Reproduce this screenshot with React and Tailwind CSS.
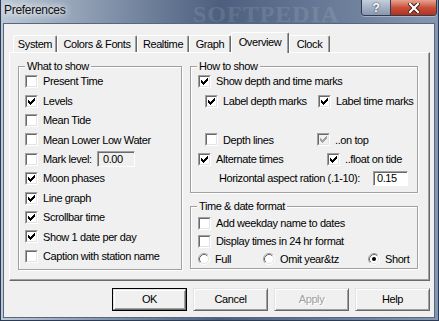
import React from 'react';

// classic 7x7 check glyph
const CHECK_PIXELS = [
  [6, 0], [5, 1], [6, 1], [0, 2], [4, 2], [5, 2], [6, 2],
  [0, 3], [1, 3], [3, 3], [4, 3], [5, 3], [0, 4], [1, 4], [2, 4], [3, 4], [4, 4],
  [1, 5], [2, 5], [3, 5], [2, 6],
];

const CheckGlyph = ({ color }) => (
  <svg width="7" height="7" viewBox="0 0 7 7" shapeRendering="crispEdges">
    {CHECK_PIXELS.map(([x, y]) => (
      <rect key={`${x}-${y}`} x={x} y={y} width="1" height="1" fill={color} />
    ))}
  </svg>
);

const Box = ({ checked, disabled }) => (
  <span className="relative block w-[13px] h-[13px] shrink-0 border border-t-[#a0a0a0] border-l-[#a0a0a0] border-r-white border-b-white">
    <span
      className={`absolute inset-0 flex items-center justify-center border border-t-[#696969] border-l-[#696969] border-r-[#e3e3e3] border-b-[#e3e3e3] ${
        disabled ? 'bg-[#f0f0f0]' : 'bg-white'
      }`}
    >
      {checked && <CheckGlyph color={disabled ? '#a0a0a0' : '#000'} />}
    </span>
  </span>
);

const Check = ({ label, checked, disabled, className = '' }) => (
  <div className={`flex items-center ${className}`}>
    <Box checked={checked} disabled={disabled} />
    <span className="ml-[5px] whitespace-nowrap">{label}</span>
  </div>
);

const Radio = ({ label, selected, className = '' }) => (
  <div className={`flex items-center ${className}`}>
    <svg width="12" height="12" viewBox="0 0 12 12" className="shrink-0">
      <circle cx="6" cy="6" r="4.5" fill="#fff" />
      <path d="M2.11 9.89 A5.5 5.5 0 0 1 9.89 2.11" stroke="#a0a0a0" fill="none" />
      <path d="M9.89 2.11 A5.5 5.5 0 0 1 2.11 9.89" stroke="#ffffff" fill="none" />
      <path d="M2.82 9.18 A4.5 4.5 0 0 1 9.18 2.82" stroke="#696969" fill="none" />
      <path d="M9.18 2.82 A4.5 4.5 0 0 1 2.82 9.18" stroke="#e3e3e3" fill="none" />
      {selected && <circle cx="6" cy="6" r="2" fill="#000" />}
    </svg>
    <span className="ml-[5px] whitespace-nowrap">{label}</span>
  </div>
);

const GroupBox = ({ title, className = '', children }) => (
  <div className={`relative border border-[#a0a0a0] shadow-[inset_1px_1px_0_#fff,1px_1px_0_#fff] ${className}`}>
    <span className="absolute left-[6px] top-[-8px] px-[2px] bg-[#f0f0f0] leading-[14px] whitespace-nowrap">
      {title}
    </span>
    {children}
  </div>
);

const Sunken = ({ value, className = '' }) => (
  <div
    className={`relative shrink-0 border border-t-[#a0a0a0] border-l-[#a0a0a0] border-r-white border-b-white shadow-[inset_1px_1px_0_#696969] flex items-center leading-none ${className}`}
  >
    {value}
  </div>
);

const Button = ({ label, disabled, primary }) => {
  const inner = (
    <div
      className={`w-full h-full flex items-center justify-center border border-t-[#e3e3e3] border-l-[#e3e3e3] border-r-[#696969] border-b-[#696969] shadow-[inset_1px_1px_0_#fff,inset_-1px_-1px_0_#a0a0a0] ${
        disabled ? 'text-[#a0a0a0] [text-shadow:1px_1px_0_#fff]' : ''
      }`}
    >
      {label}
    </div>
  );
  return (
    <div className={`w-[75px] h-[23px] ${primary ? 'border border-black' : ''}`}>{inner}</div>
  );
};

const tabs = [
  ['System', 44],
  ['Colors & Fonts', 80],
  ['Realtime', 52],
  ['Graph', 42],
  ['Overview', 58],
  ['Clock', 41],
];

export default function App() {
  return (
    <div className="relative w-[439px] h-[321px] overflow-hidden flex flex-col border-x border-b border-[#2c3b55] bg-gradient-to-r from-[#bcc8d6] via-[#4c5f7e] to-[#8597b0] font-['Liberation_Sans',Arial,sans-serif] text-[11px] tracking-[-0.4px] text-black">
      {/* title bar */}
      <div className="relative flex items-start h-[23px] shrink-0">
        <span className="pl-[3px] leading-[20px] text-[12px] tracking-[-0.3px] text-[#111] [text-shadow:0_0_6px_#fff,0_0_10px_#fff]">
          Preferences
        </span>
        <span className="pointer-events-none absolute left-[192px] top-[-4px] font-['Liberation_Serif',serif] font-bold text-[24px] tracking-[1px] text-white/10">
          SOFTPEDIA
        </span>
        <div className="ml-auto mr-[1px] flex h-[16px] rounded-b-[4px] border border-t-0 border-[#2e3a4e] overflow-hidden shadow-[0_1px_0_rgba(255,255,255,0.35)]">
          <div className="w-[28px] flex items-center justify-center bg-gradient-to-b from-[#c5cfdc] to-[#8797b0] text-white font-bold text-[12px] leading-none [text-shadow:0_0_2px_#223]">
            ?
          </div>
          <div className="w-[46px] flex items-center justify-center border-l border-[#2e3a4e] bg-gradient-to-b from-[#e6a391] via-[#c94f3a] to-[#b3321e]">
            <svg width="12" height="10" viewBox="0 0 12 10">
              <path d="M2 1 L10 9 M10 1 L2 9" stroke="#3a1a14" strokeWidth="4" strokeLinecap="square" />
              <path d="M2 1 L10 9 M10 1 L2 9" stroke="#fff" strokeWidth="2.2" strokeLinecap="square" />
            </svg>
          </div>
        </div>
      </div>

      {/* client area */}
      <div className="ml-[2px] mr-[3px] mb-[2px] flex-1 flex flex-col border border-[#56677f] bg-[#f0f0f0]">
        {/* tabs */}
        <div className="flex items-end h-[20px] mt-[8px] pl-[9px]">
          {tabs.map(([name, w]) => {
            const active = name === 'Overview';
            return (
              <div
                key={name}
                style={{ width: w }}
                className={`flex items-center justify-center rounded-t-[2px] border-t border-l border-white border-r border-r-[#696969] shadow-[inset_-1px_0_0_#a0a0a0] bg-[#f0f0f0] whitespace-nowrap ${
                  active ? 'relative z-10 h-[21px] -mb-[1px] pb-[2px]' : 'h-[17px]'
                }`}
              >
                {name}
              </div>
            );
          })}
        </div>

        {/* panel */}
        <div className="ml-[5px] w-[421px] h-[229px] flex gap-[8px] pl-[8px] pt-[13px] border-t border-l border-white border-r border-b border-r-[#696969] border-b-[#696969] shadow-[inset_-1px_-1px_0_#a0a0a0]">
          <GroupBox title="What to show" className="w-[164px] h-[204px] pl-[6px] pt-[5px]">
            {[
              ['Present Time', false],
              ['Levels', true],
              ['Mean Tide', false],
              ['Mean Lower Low Water', false],
            ].map(([l, c]) => (
              <Check key={l} label={l} checked={c} className="h-[19.4px]" />
            ))}
            <div className="flex items-center h-[19.4px]">
              <Box checked={false} />
              <span className="ml-[5px] w-[54px] whitespace-nowrap">Mark level:</span>
              <Sunken value="0.00" className="w-[38px] h-[16px] pl-[5px] bg-[#f0f0f0]" />
            </div>
            {[
              ['Moon phases', true],
              ['Line graph', true],
              ['Scrollbar time', true],
              ['Show 1 date per day', true],
              ['Caption with station name', false],
            ].map(([l, c]) => (
              <Check key={l} label={l} checked={c} className="h-[19.4px]" />
            ))}
          </GroupBox>

          <div className="w-[228px] flex flex-col gap-[13px]">
            <GroupBox title="How to show" className="h-[127px] pl-[7px] pt-[5px]">
              <Check label="Show depth and time marks" checked className="h-[19.4px]" />
              <div className="flex items-center h-[19.4px] pl-[7px]">
                <Check label="Label depth marks" checked className="w-[113px]" />
                <Check label="Label time marks" checked />
              </div>
              <div className="h-[19.4px]" />
              <div className="flex items-center h-[19.4px] pl-[7px]">
                <Check label="Depth lines" checked={false} className="w-[112px]" />
                <Check label="..on top" checked disabled />
              </div>
              <div className="flex items-center h-[19.4px]">
                <Check label="Alternate times" checked className="w-[129px]" />
                <Check label="..float on tide" checked />
              </div>
              <div className="flex items-center h-[19.4px] pl-[21px]">
                <span className="w-[154px] whitespace-nowrap">Horizontal aspect ration (.1-10):</span>
                <Sunken value="0.15" className="w-[35px] h-[15px] pl-[3px] bg-white" />
              </div>
            </GroupBox>

            <GroupBox title="Time & date format" className="h-[63px] pl-[7px] pt-[7px]">
              <Check label="Add weekday name to dates" checked={false} className="h-[18.2px]" />
              <Check label="Display times in 24 hr format" checked={false} className="h-[18.2px]" />
              <div className="flex items-center h-[18.2px]">
                <Radio label="Full" className="w-[65px]" />
                <Radio label="Omit year&tz" className="w-[105px]" />
                <Radio label="Short" selected />
              </div>
            </GroupBox>
          </div>
        </div>

        {/* buttons */}
        <div className="flex justify-end gap-[6px] mt-[7px] pr-[4px]">
          <Button label="OK" primary />
          <Button label="Cancel" />
          <Button label="Apply" disabled />
          <Button label="Help" />
        </div>
      </div>
    </div>
  );
}
